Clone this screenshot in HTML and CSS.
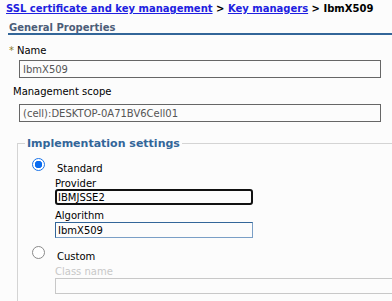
FILE: index.html
```html
<!DOCTYPE html>
<html lang="en">
<head>
    <meta charset="UTF-8">
    <title>IbmX509</title>
    <link rel="stylesheet" href="styles.css">
</head>
<body>
    <div class="breadcrumb">
        <a href="#">SSL certificate and key management</a> &gt;
        <a href="#">Key managers</a> &gt; IbmX509
    </div>

    <div class="section">
        <h3 class="section-title">General Properties</h3>

        <label class="label required"><span class="star">*</span>Name</label>
        <input type="text" class="text-input" value="IbmX509" readonly>

        <label class="label scope">Management scope</label>
        <input type="text" class="text-input scope-input" value="(cell):DESKTOP-0A71BV6Cell01" readonly>

        <fieldset class="impl">
            <legend>Implementation settings</legend>

            <div class="option first">
                <span class="radio checked"></span>
                <span class="option-label">Standard</span>
            </div>
            <div class="sub">
                <label class="sub-label">Provider</label>
                <input type="text" class="sub-input focused" value="IBMJSSE2">
                <label class="sub-label second">Algorithm</label>
                <input type="text" class="sub-input" value="IbmX509">
            </div>

            <div class="option">
                <span class="radio"></span>
                <span class="option-label">Custom</span>
            </div>
            <div class="sub">
                <label class="sub-label disabled">Class name</label>
                <input type="text" class="sub-input wide" disabled>
            </div>
        </fieldset>
    </div>
</body>
</html>
```

FILE: styles.css
```css
html, body {
    overflow: hidden;
}

body {
    margin: 0;
    background-color: #fcfcfc;
    font-family: "DejaVu Sans", Verdana, sans-serif;
    font-size: 10px;
    color: #000;
}

.breadcrumb {
    padding: 2px 6px 0;
    font-weight: bold;
    line-height: 14px;
    white-space: nowrap;
}

.breadcrumb a {
    color: #2020e0;
}

.section {
    margin-left: 8px;
}

.section-title {
    margin: 6px 0 0;
    padding: 0 0 0 1px;
    font-size: 10px;
    line-height: 11px;
    color: #4c5d78;
    border-bottom: 2px solid #336699;
}

.label {
    display: block;
    margin-top: 9px;
    padding-left: 5px;
    line-height: 13px;
}

.label.required {
    padding-left: 1px;
}

.label.scope {
    margin-top: 7px;
}

.star {
    color: #8a7a28;
    margin-right: 3px;
}

.text-input {
    display: block;
    box-sizing: border-box;
    width: 362px;
    height: 18px;
    margin: 3px 0 0 11px;
    padding: 0 3px;
    border: 1px solid #666;
    background: #fcfcfc;
    font-family: inherit;
    font-size: 10px;
    color: #555;
    outline: none;
}

.text-input.scope-input {
    margin-top: 6px;
}

.impl {
    margin: 15px 0 0 9px;
    padding: 0 0 20px 14px;
    border: 0;
    border-top: 1px solid #d4d4d4;
    border-left: 1px solid #d4d4d4;
    width: 420px;
}

.impl legend {
    padding: 0 2px;
    margin-left: -7px;
    font-weight: bold;
    font-size: 11px;
    line-height: 13px;
    color: #336699;
}

.option {
    display: flex;
    align-items: flex-start;
    margin-top: 8px;
}

.radio {
    box-sizing: border-box;
    flex: none;
    width: 13px;
    height: 13px;
    border-radius: 50%;
    border: 1px solid #8a8a8a;
    background: #fff;
}

.radio.checked {
    border: 1px solid #1a73e8;
    background: radial-gradient(circle, #0a6cf0 0 3.5px, #fff 4px);
}

.option-label {
    margin: 4px 0 0 12px;
    line-height: 13px;
}

.sub {
    padding-left: 23px;
}

.sub-label {
    display: block;
    margin-top: 3px;
    line-height: 11px;
}

.sub-label.second {
    margin-top: 5px;
}

.sub-label.disabled {
    color: #c8c8c8;
}

.sub-input {
    display: block;
    box-sizing: border-box;
    width: 198px;
    height: 16px;
    margin: 1px 0 0;
    padding: 0 2px;
    border: 1px solid #7a9fc6;
    border-top-color: #336699;
    border-left-color: #336699;
    background: #fcfcfc;
    font-family: inherit;
    font-size: 10px;
    color: #000;
    outline: none;
}

.sub-input.focused {
    margin-top: 0;
    border: 2px solid #111;
    border-radius: 3px;
    padding: 0 1px;
}

.sub-input.wide {
    width: 360px;
    border: 1px solid #c8c8c8;
}
```
